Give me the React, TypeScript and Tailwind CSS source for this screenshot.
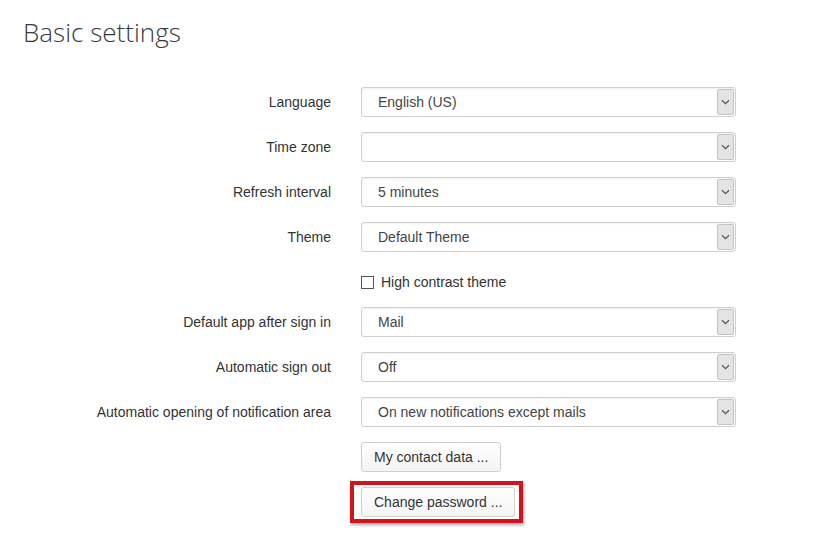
import React from "react"

const rows: { label: string; value: string }[] = [
  { label: "Language", value: "English (US)" },
  { label: "Time zone", value: "" },
  { label: "Refresh interval", value: "5 minutes" },
  { label: "Theme", value: "Default Theme" },
]

const rows2: { label: string; value: string }[] = [
  { label: "Default app after sign in", value: "Mail" },
  { label: "Automatic sign out", value: "Off" },
  { label: "Automatic opening of notification area", value: "On new notifications except mails" },
]

function Select({ value }: { value: string }) {
  return (
    <div className="flex h-[30px] w-[375px] items-stretch rounded-[3px] border border-[#cfcfcf] bg-white shadow-[inset_0_1px_2px_rgba(0,0,0,0.06)]">
      <div className="flex flex-1 items-center pl-[16px] text-[14px] text-[#444]">{value}</div>
      <div className="my-[1px] mr-[1px] flex w-[17px] items-center justify-center rounded-[2px] border border-[#c4c4c4] bg-[#e4e4e4]">
        <svg width="9" height="6" viewBox="0 0 9 6" fill="none">
          <path d="M1 1.2 L4.5 4.6 L8 1.2" stroke="#555" strokeWidth="1.2" />
        </svg>
      </div>
    </div>
  )
}

function Row({ label, value }: { label: string; value: string }) {
  return (
    <div className="flex h-[30px] items-center">
      <div className="w-[331px] text-right text-[14px] text-[#333]">{label}</div>
      <div className="ml-[30px]">
        <Select value={value} />
      </div>
    </div>
  )
}

function Button({ children }: { children: React.ReactNode }) {
  return (
    <button className="flex h-[30px] items-center rounded-[3px] border border-[#d0d0d0] bg-gradient-to-b from-white to-[#f4f4f4] px-[12px] text-[14px] text-[#333]">
      {children}
    </button>
  )
}

export default function App() {
  return (
    <div
      className="min-h-[559px] w-[829px] bg-white pl-[23px] pt-[16px]"
      style={{ fontFamily: '"Liberation Sans", Arial, sans-serif' }}
    >
      <h1
        className="h-[32px] text-[26px] font-light leading-[32px] text-[#3a3a3a]"
        style={{ fontFamily: '"Open Sans", sans-serif' }}
      >
        Basic settings
      </h1>

      <div className="-ml-[23px] mt-[39px] flex flex-col gap-[15px]">
        {rows.map((r) => (
          <Row key={r.label} label={r.label} value={r.value} />
        ))}
        <div className="flex h-[30px] items-center pl-[361px]">
          <span className="h-[13px] w-[13px] border border-[#555] bg-white" />
          <span className="ml-[7px] text-[14px] text-[#333]">High contrast theme</span>
        </div>
      </div>

      <div className="-ml-[23px] mt-[10px] flex flex-col gap-[15px]">
        {rows2.map((r) => (
          <Row key={r.label} label={r.label} value={r.value} />
        ))}
        <div className="flex h-[30px] items-center pl-[361px]">
          <Button>My contact data ...</Button>
        </div>
        <div className="flex h-[30px] items-center pl-[361px]">
          <div className="relative">
            <Button>Change password ...</Button>
            <div className="pointer-events-none absolute -bottom-[6px] -left-[11px] -right-[8px] -top-[6px] border-[4px] border-[#d3141c] shadow-[1px_2px_3px_rgba(0,0,0,0.35)]" />
          </div>
        </div>
      </div>
    </div>
  )
}
